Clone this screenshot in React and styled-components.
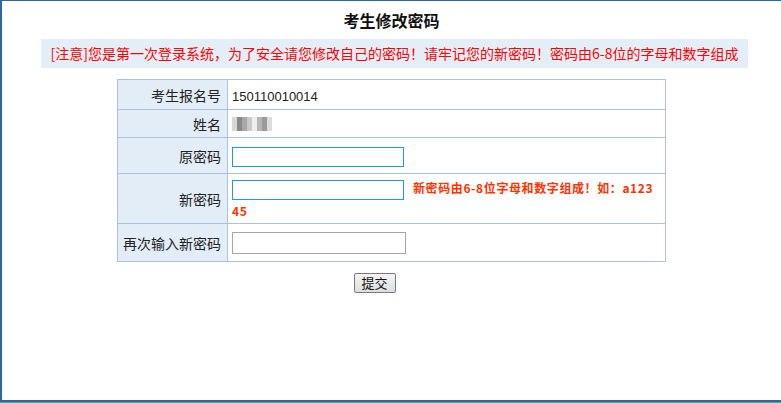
import React from 'react';
import styled, { createGlobalStyle } from 'styled-components';

const GlobalStyle = createGlobalStyle`
  html, body {
    margin: 0;
    padding: 0;
    background: #8a8a8a;
  }
  body {
    font-family: "Noto Sans CJK SC", "Liberation Sans", sans-serif;
  }
`;

const Frame = styled.div`
  box-sizing: border-box;
  height: 402px;
  background: #fff;
  border-top: 1px solid #2d68a0;
  border-left: 2px solid #2d68a0;
  border-bottom: 2px solid #2d68a0;
  overflow: hidden;
`;

const Title = styled.h2`
  margin: 0;
  padding-top: 8px;
  height: 30px;
  text-align: center;
  font-size: 16px;
  font-weight: bold;
  line-height: 22px;
  color: #111;
`;

const Notice = styled.div`
  box-sizing: border-box;
  width: 707px;
  height: 29px;
  margin: 0 0 11px 39px;
  background: #e4eef7;
  color: #ff0000;
  font-size: 14px;
  line-height: 29px;
  text-align: center;
  white-space: nowrap;
`;

const Table = styled.table`
  width: 549px;
  margin: 0 auto;
  border-collapse: collapse;
  font-size: 14px;
  color: #222;
`;

const Row = styled.tr`
  height: ${(p) => p.$h}px;
`;

const LabelCell = styled.td`
  width: 103px;
  padding: 0 6px 0 0;
  border: 1px solid #aac2de;
  background: #e3edf7;
  text-align: right;
  vertical-align: middle;
  white-space: nowrap;
`;

const ValueCell = styled.td`
  padding: 0 9px 0 4px;
  border: 1px solid #aac2de;
  vertical-align: middle;
  word-break: break-all;
`;

const Number = styled.span`
  font-family: "Liberation Sans", sans-serif;
  font-size: 13px;
`;

const Blur = styled.div`
  display: flex;
  height: 14px;
  align-items: stretch;
`;

const BlurPx = styled.span`
  width: 5px;
  background: ${(p) => p.$c};
`;

const Input = styled.input`
  box-sizing: border-box;
  width: ${(p) => p.$w}px;
  height: ${(p) => p.$hh}px;
  margin: 0;
  padding: 1px 3px;
  border: 1px solid ${(p) => (p.$active ? '#1e9ad6' : '#a6a6a6')};
  background: #fff;
  vertical-align: middle;
  outline: none;
  font-size: 13px;
`;

const Hint = styled.span`
  margin-left: 9px;
  color: #ff3300;
  font-weight: bold;
  font-size: 12px;
  line-height: 18px;
  letter-spacing: 0.6px;
`;

const ButtonRow = styled.div`
  display: flex;
  justify-content: center;
  padding: 11px 34px 0 0;
`;

const Button = styled.button`
  box-sizing: border-box;
  width: 42px;
  height: 20px;
  padding: 0;
  border: 1px solid #7a7a7a;
  border-radius: 2px;
  background: linear-gradient(#f4f4f4, #dedede);
  font-family: "Noto Sans CJK SC", sans-serif;
  font-size: 13px;
  line-height: 18px;
  color: #111;
`;

const blurColors = ['#d8d8d8', '#8a8a8a', '#a8a8a8', '#c9c9c9', '#eeeeee', '#b6b6b6', '#9a9a9a', '#dcdcdc'];

export default function App() {
  return (
    <>
      <GlobalStyle />
      <Frame>
        <Title>考生修改密码</Title>
        <Notice>[注意]您是第一次登录系统，为了安全请您修改自己的密码！请牢记您的新密码！密码由6-8位的字母和数字组成</Notice>
        <Table>
          <tbody>
            <Row $h={30}>
              <LabelCell>考生报名号</LabelCell>
              <ValueCell><Number>150110010014</Number></ValueCell>
            </Row>
            <Row $h={28}>
              <LabelCell>姓名</LabelCell>
              <ValueCell>
                <Blur>
                  {blurColors.map((c, i) => (
                    <BlurPx key={i} $c={c} />
                  ))}
                </Blur>
              </ValueCell>
            </Row>
            <Row $h={36}>
              <LabelCell>原密码</LabelCell>
              <ValueCell>
                <Input type="password" $w={172} $hh={20} $active />
              </ValueCell>
            </Row>
            <Row $h={50}>
              <LabelCell>新密码</LabelCell>
              <ValueCell>
                <Input type="password" $w={172} $hh={20} $active />
                <Hint>新密码由6-8位字母和数字组成！如：a12345</Hint>
              </ValueCell>
            </Row>
            <Row $h={38}>
              <LabelCell>再次输入新密码</LabelCell>
              <ValueCell>
                <Input type="password" $w={174} $hh={22} />
              </ValueCell>
            </Row>
          </tbody>
        </Table>
        <ButtonRow>
          <Button type="button">提交</Button>
        </ButtonRow>
      </Frame>
    </>
  );
}
